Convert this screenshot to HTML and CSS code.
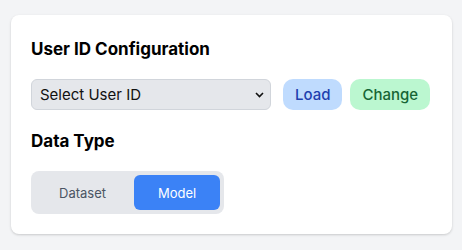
FILE: index.html
```html
<!DOCTYPE html>
<html>
<head>
<meta charset="utf-8">
<link rel="stylesheet" href="styles.css">
</head>
<body>
<div class="page">
  <div class="card">
    <h2 class="title">User ID Configuration</h2>
    <div class="row">
      <div class="select">
        <span>Select User ID</span>
        <svg class="chev" width="9" height="6" viewBox="0 0 9 6"><path d="M1 1l3.5 3.5L8 1" fill="none" stroke="#111" stroke-width="1.6"/></svg>
      </div>
      <button class="btn btn-load">Load</button>
      <button class="btn btn-change">Change</button>
    </div>
    <h2 class="title title-2">Data Type</h2>
    <div class="toggle">
      <button class="opt">Dataset</button>
      <button class="opt active">Model</button>
    </div>
  </div>
</div>
</body>
</html>
```

FILE: styles.css
```css
html, body { margin: 0; padding: 0; }
body { background: #f3f4f6; font-family: Inter, "Noto Sans", sans-serif; color: #111827; }
.page { padding: 15px 10px 16px 11px; }
.card {
  background: #fff;
  border-radius: 8px;
  box-shadow: 0 1px 3px rgba(0,0,0,0.12), 0 1px 2px rgba(0,0,0,0.06);
  padding: 20px;
}
.title { margin: 0; font-size: 17px; font-weight: 700; line-height: 28px; color: #000; }
.row { display: flex; align-items: center; margin-top: 16px; }
.select {
  flex: 0 0 240px; height: 31px; box-sizing: border-box;
  background: #e5e7eb; border: 1px solid #d1d5db; border-radius: 6px;
  display: flex; align-items: center; justify-content: space-between;
  padding: 0 6px 0 8px; font-size: 15px; color: #111;
}
.btn {
  height: 31px; border: none; border-radius: 10px; padding: 0 12px;
  font-family: inherit; font-size: 15px; font-weight: 500;
}
.btn-load { background: #bfdbfe; color: #1e40af; margin-left: 12px; }
.btn-change { background: #bbf7d0; color: #166534; margin-left: 8px; }
.title-2 { margin-top: 17px; }
.toggle {
  display: inline-flex; gap: 4px; padding: 4px; margin-top: 16px;
  background: #e5e7eb; border-radius: 8px;
}
.opt {
  height: 35px; border: none; background: transparent; border-radius: 6px;
  padding: 0 24px; font-family: inherit; font-size: 13px; color: #4b5563;
}
.opt.active { background: #3b82f6; color: #fff; }
```
